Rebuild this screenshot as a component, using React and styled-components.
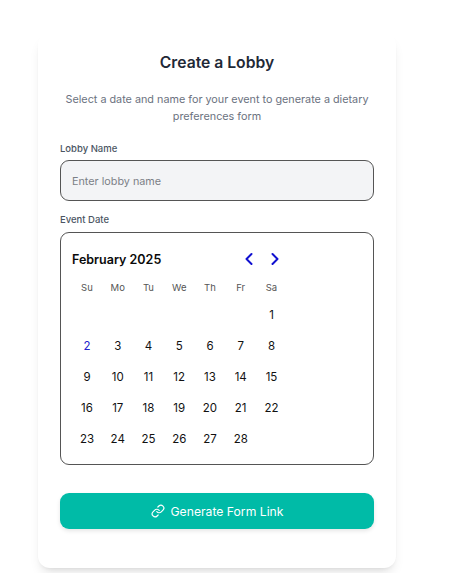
import React from "react";
import styled, { createGlobalStyle } from "styled-components";
import { ChevronLeft, ChevronRight, Link } from "lucide-react";

const GlobalStyle = createGlobalStyle`
  html, body { margin: 0; padding: 0; background: #fff; }
  body { font-family: Inter, "Liberation Sans", sans-serif; overflow: hidden; }
`;

const Page = styled.div`
  width: 467px;
  height: 573px;
  padding: 33px 0 0 38px;
  box-sizing: border-box;
`;

const Card = styled.div`
  width: 358px;
  height: 535px;
  box-sizing: border-box;
  padding: 19px 22px 0;
  background: #fff;
  border-radius: 12px;
  box-shadow: 0 8px 12px -3px rgba(0, 0, 0, 0.1), 0 3px 5px -3px rgba(0, 0, 0, 0.1);
`;

const Title = styled.h1`
  margin: 0;
  font-size: 15.7px;
  line-height: 22px;
  font-weight: 600;
  color: #1f2937;
  text-align: center;
`;

const Subtitle = styled.p`
  margin: 17px 0 0;
  font-size: 10.8px;
  line-height: 17px;
  color: #6b7280;
  text-align: center;
`;

const Label = styled.label`
  display: block;
  margin-bottom: 4px;
  font-size: 9.5px;
  line-height: 14px;
  font-weight: 500;
  color: #4b5563;
  margin-top: ${(p) => p.$top}px;
`;

const NameInput = styled.input`
  display: block;
  width: 100%;
  height: 41px;
  box-sizing: border-box;
  padding: 1px 11px 0;
  background: #f3f4f6;
  border: 1.2px solid #555;
  border-radius: 9px;
  font: 400 10.8px Inter, sans-serif;
  &::placeholder { color: #7b7f86; opacity: 1; }
`;

const Calendar = styled.div`
  height: 233px;
  box-sizing: border-box;
  margin-top: 5px;
  padding: 16px 11px 0 10.6px;
  border: 1.2px solid #555;
  border-radius: 9px;
`;

const CalendarHead = styled.div`
  display: flex;
  align-items: center;
  height: 20px;
  width: 213px;
  justify-content: space-between;
`;

const Month = styled.span`
  font-size: 12.5px;
  font-weight: 600;
  color: #0a0a0a;
  padding-left: 0.4px;
`;

const Nav = styled.div`
  display: flex;
  gap: 6px;
  color: #1010d0;
`;

const Grid = styled.div`
  display: grid;
  grid-template-columns: repeat(7, 30.75px);
  grid-auto-rows: 30.8px;
  margin-top: 1px;
`;

const Weekday = styled.div`
  display: flex;
  align-items: center;
  justify-content: center;
  height: 24px;
  font-size: 9.5px;
  font-weight: 400;
  color: #555;
`;

const WeekdayRow = styled(Grid)`
  grid-auto-rows: 24px;
  margin-top: 6px;
`;

const Day = styled.div`
  display: flex;
  align-items: center;
  justify-content: center;
  font-size: 11.5px;
  color: ${(p) => (p.$active ? "#2222cc" : "#111")};
`;

const Button = styled.button`
  display: flex;
  align-items: center;
  justify-content: center;
  gap: 6px;
  width: 100%;
  height: 36px;
  margin-top: 28px;
  border: none;
  border-radius: 9px;
  background: #00bba7;
  color: #fff;
  font: 400 12.2px Inter, sans-serif;
  box-shadow: 0 2px 4px rgba(0, 0, 0, 0.1);
`;

const weekdays = ["Su", "Mo", "Tu", "We", "Th", "Fr", "Sa"];
const days = [...Array(6).fill(null), ...Array.from({ length: 28 }, (_, i) => i + 1)];

export default function App() {
  return (
    <Page>
      <GlobalStyle />
      <Card>
        <Title>Create a Lobby</Title>
        <Subtitle>
          Select a date and name for your event to generate a dietary preferences form
        </Subtitle>
        <Label $top={17} htmlFor="lobby">Lobby Name</Label>
        <NameInput id="lobby" placeholder="Enter lobby name" />
        <Label $top={12}>Event Date</Label>
        <Calendar>
          <CalendarHead>
            <Month>February 2025</Month>
            <Nav>
              <ChevronLeft size={20} strokeWidth={2.4} />
              <ChevronRight size={20} strokeWidth={2.4} />
            </Nav>
          </CalendarHead>
          <WeekdayRow>
            {weekdays.map((d) => <Weekday key={d}>{d}</Weekday>)}
          </WeekdayRow>
          <Grid>
            {days.map((d, i) => <Day key={i} $active={d === 2}>{d}</Day>)}
          </Grid>
        </Calendar>
        <Button>
          <Link size={14} />
          Generate Form Link
        </Button>
      </Card>
    </Page>
  );
}
